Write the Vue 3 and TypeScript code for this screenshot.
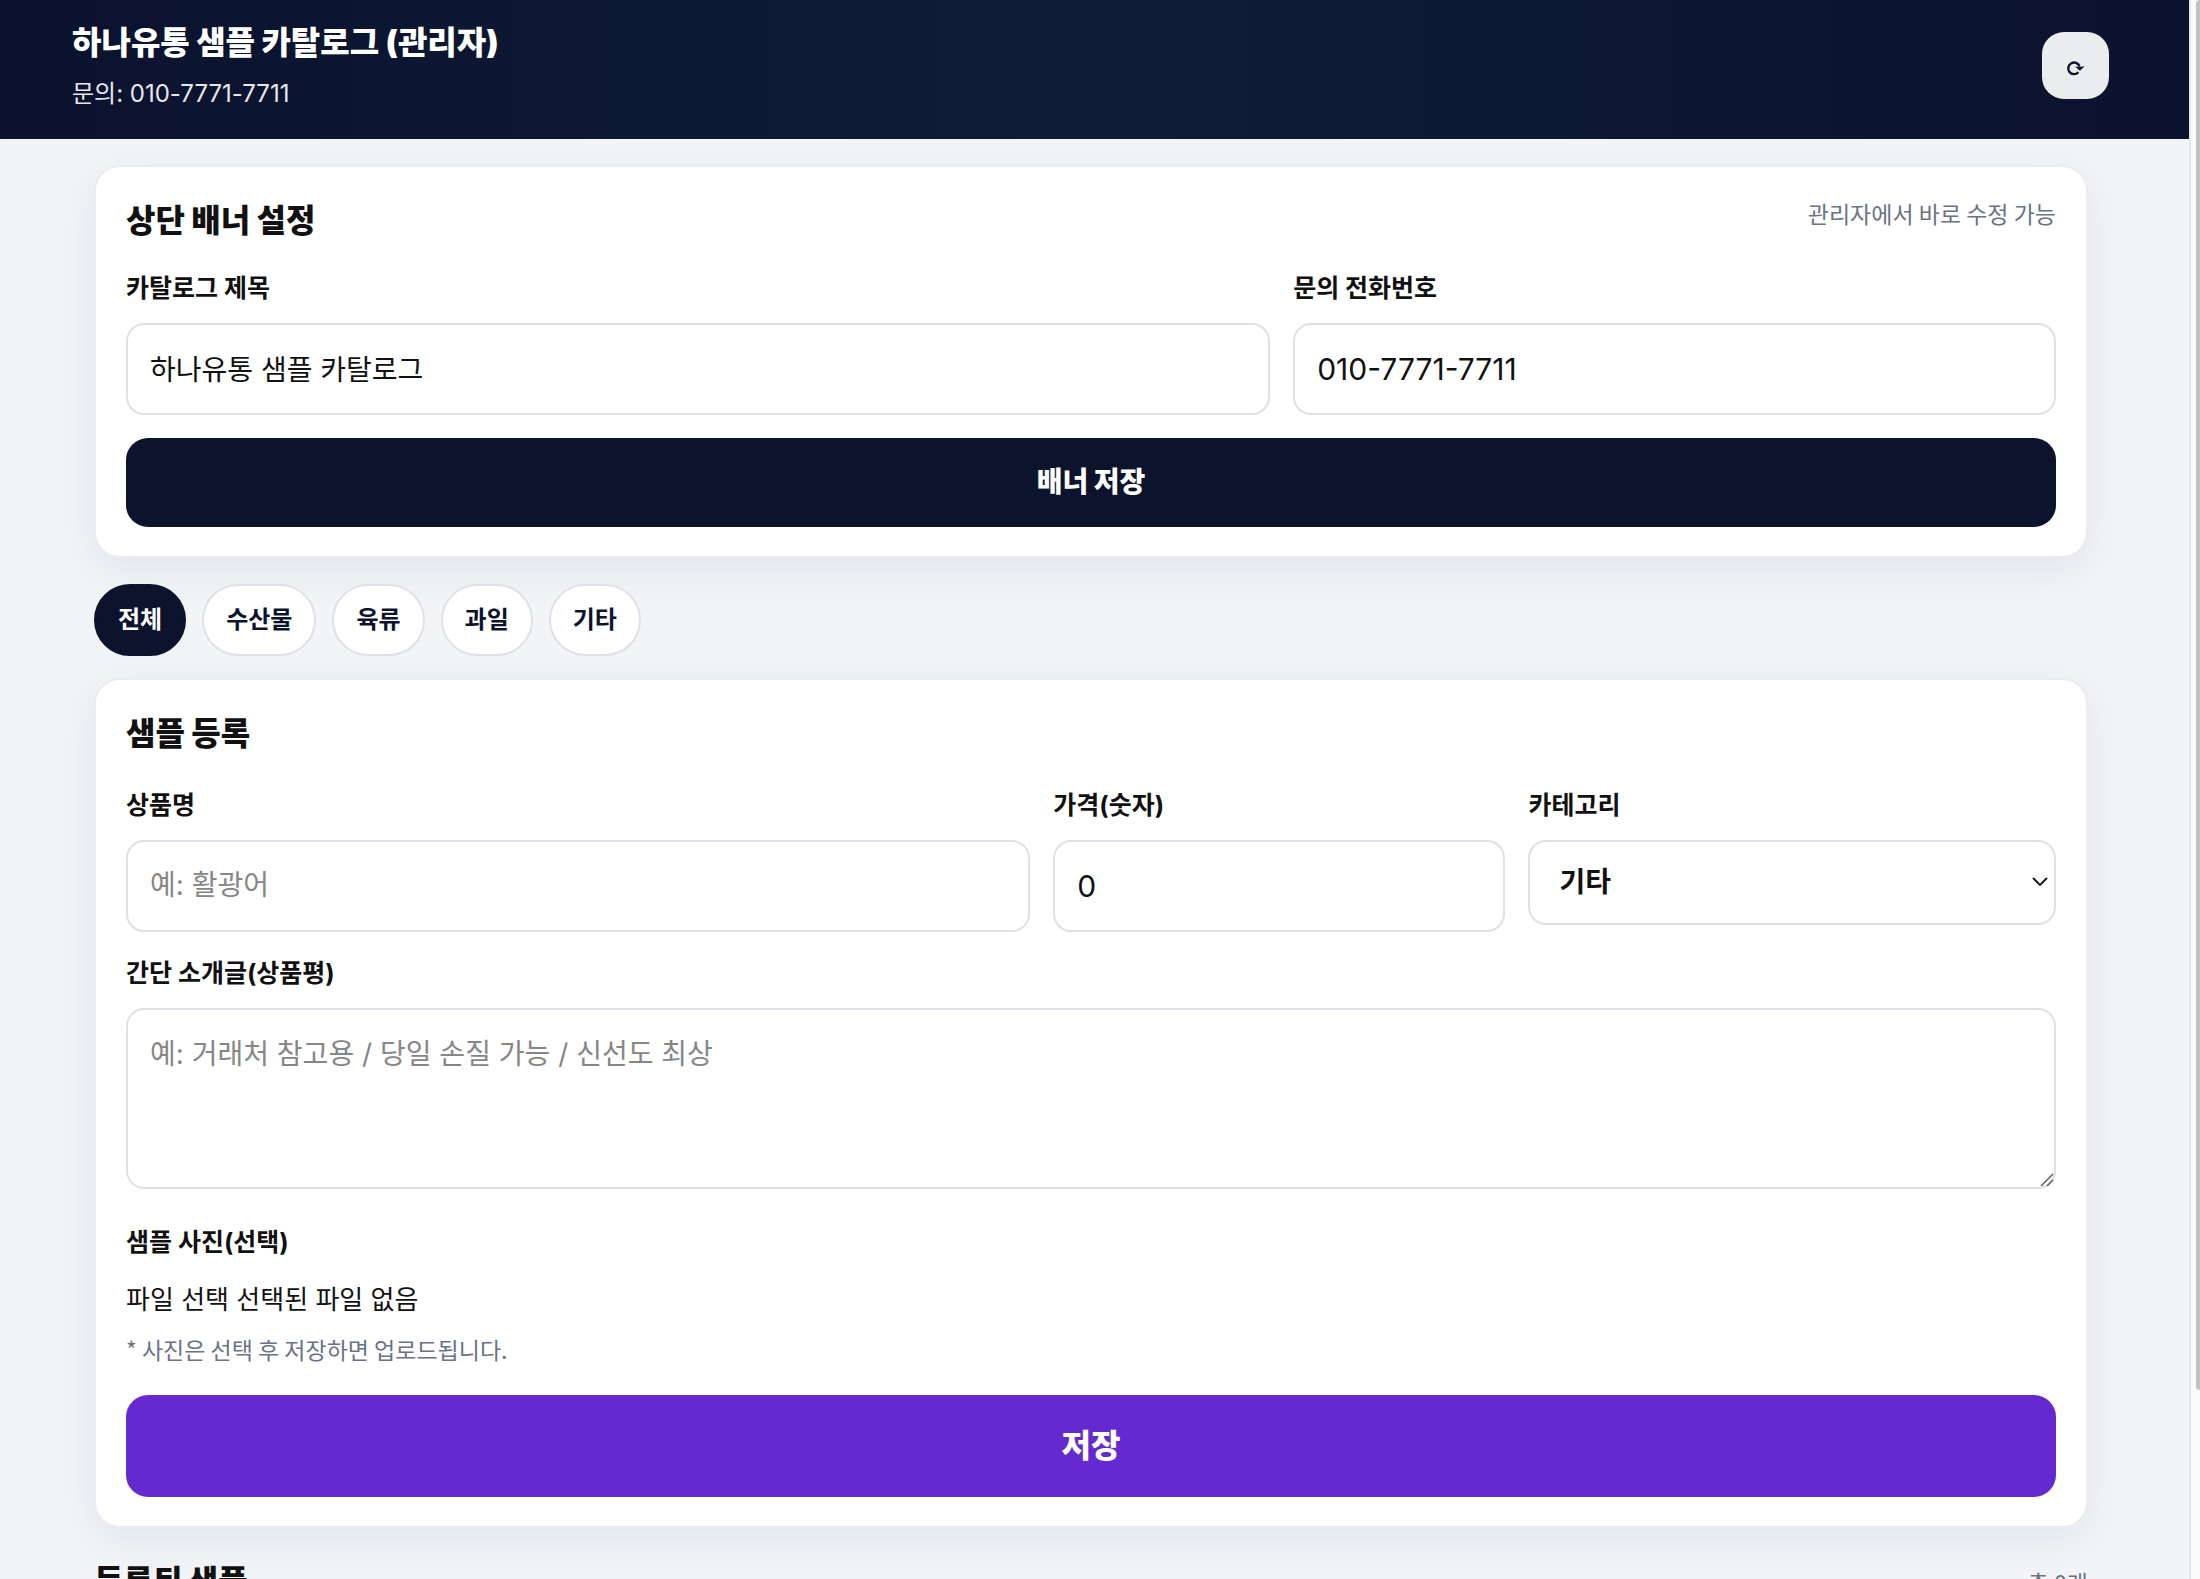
<script setup lang="ts">
import { computed, ref } from 'vue'

const title = ref('하나유통 샘플 카탈로그')
const phone = ref('010-7771-7711')
const categories = ['전체', '수산물', '육류', '과일', '기타']
const active = ref('전체')
const name = ref('')
const price = ref('0')
const category = ref('기타')
const intro = ref('')
const fileName = ref('')
const fileText = computed(() => fileName.value || '선택된 파일 없음')

function pickFile(event: Event) {
  const files = (event.target as HTMLInputElement).files
  fileName.value = files && files.length ? files[0].name : ''
}
</script>

<template>
  <div class="shell">
    <div class="page">
      <header class="top">
        <div>
          <h1>{{ title }} (관리자)</h1>
          <p>문의: {{ phone }}</p>
        </div>
        <button type="button" class="refresh" aria-label="새로고침">
          <svg viewBox="0 0 20 16" width="20" height="16" aria-hidden="true">
            <path d="M12.4 12.2A5.8 5.8 0 1 1 13.6 6.6" fill="none" stroke="#0b122d" stroke-width="2.4" />
            <path d="M9 6.4 13.5 7 18.6 6.2 14 10.8Z" fill="#0b122d" />
          </svg>
        </button>
      </header>

      <main>
        <section class="card">
          <div class="card-head">
            <h2>상단 배너 설정</h2>
            <span class="hint">관리자에서 바로 수정 가능</span>
          </div>
          <div class="row banner-row">
            <div class="field">
              <label for="title">카탈로그 제목</label>
              <input id="title" v-model="title" type="text" />
            </div>
            <div class="field">
              <label for="phone">문의 전화번호</label>
              <input id="phone" v-model="phone" class="digits" type="text" />
            </div>
          </div>
          <button type="button" class="primary">배너 저장</button>
        </section>

        <nav class="chips">
          <button
            v-for="item in categories"
            :key="item"
            type="button"
            :class="['chip', { on: item === active }]"
            @click="active = item"
          >{{ item }}</button>
        </nav>

        <section class="card">
          <div class="card-head form-head">
            <h2>샘플 등록</h2>
          </div>
          <div class="row item-row">
            <div class="field">
              <label for="name">상품명</label>
              <input id="name" v-model="name" type="text" placeholder="예: 활광어" />
            </div>
            <div class="field">
              <label for="price">가격(숫자)</label>
              <input id="price" v-model="price" class="digits" type="text" inputmode="numeric" />
            </div>
            <div class="field">
              <label for="category">카테고리</label>
              <div class="overlay-box">
                <select id="category" v-model="category">
                  <option v-for="item in categories.slice(1)" :key="item">{{ item }}</option>
                </select>
                <svg class="chevron" viewBox="0 0 16 10" width="16" height="10" aria-hidden="true">
                  <path d="M1 1 8 8 15 1" fill="none" stroke="#111" stroke-width="1.8" />
                </svg>
              </div>
            </div>
          </div>
          <div class="field intro">
            <label for="intro">간단 소개글(상품평)</label>
            <div class="overlay-box">
              <textarea id="intro" v-model="intro" placeholder="예: 거래처 참고용 / 당일 손질 가능 / 신선도 최상"></textarea>
              <svg class="grip" viewBox="0 0 14 14" width="14" height="14" aria-hidden="true">
                <path d="M1 13 13 1M7 13 13 7" fill="none" stroke="#666" stroke-width="1.6" />
              </svg>
            </div>
          </div>
          <div class="field photo">
            <label for="photo">샘플 사진(선택)</label>
            <input id="photo" class="file-input" type="file" accept="image/*" @change="pickFile" />
            <label for="photo" class="file">파일 선택 {{ fileText }}</label>
          </div>
          <p class="hint note">* 사진은 선택 후 저장하면 업로드됩니다.</p>
          <button type="button" class="primary save">저장</button>
        </section>

        <div class="list-head">
          <h2>등록된 샘플</h2>
          <span class="hint">총 0개</span>
        </div>
      </main>
    </div>
    <div class="track" aria-hidden="true"><div class="thumb"></div></div>
  </div>
</template>

<style>
body {
  margin: 0;
  overflow: hidden;
}
</style>

<style scoped>
* {
  box-sizing: border-box;
}
.shell {
  display: flex;
  height: 100vh;
  overflow: hidden;
  background: #f3f4f8;
  color: #111;
  font-family: Inter, "Noto Sans CJK KR", sans-serif;
}
.page {
  flex: 1;
  min-width: 0;
}
.track {
  display: flex;
  justify-content: flex-end;
  flex: none;
  width: 11px;
  border-left: 2px solid #e6e7ea;
  background: #fafafa;
}
.thumb {
  width: 4px;
  height: 88%;
  border-radius: 4px 0 0 4px;
  background: #c1c1c1;
}
h1,
h2,
p {
  margin: 0;
}
button,
input,
select,
textarea {
  margin: 0;
  font-family: inherit;
}
.top {
  display: flex;
  align-items: center;
  justify-content: space-between;
  padding: 20px 80px 28px 72px;
  background: linear-gradient(90deg, #0b122d, #0f1d38 50%, #0b122d);
  color: #fff;
}
h1 {
  font-size: 32px;
  line-height: 46px;
  font-weight: 900;
}
.top p {
  margin-top: 10px;
  font-size: 24px;
  line-height: 35px;
  color: #e7e8ee;
}
.refresh {
  display: flex;
  align-items: center;
  justify-content: center;
  width: 67px;
  height: 67px;
  padding: 4px 0 0;
  border: 0;
  border-radius: 22px;
  background: #ebecee;
}
main {
  padding: 26px 101px 0 94px;
}
.card {
  padding: 30px 30px 29px;
  border: 2px solid #ebecf1;
  border-radius: 26px;
  background: #fff;
  box-shadow: 0 12px 44px rgba(11, 18, 45, 0.07);
}
.card-head,
.list-head {
  display: flex;
  justify-content: space-between;
  align-items: flex-start;
}
h2 {
  font-size: 32px;
  line-height: 48px;
  font-weight: 900;
}
.hint {
  font-family: "Noto Sans CJK KR", sans-serif;
  font-size: 23px;
  line-height: 32px;
  color: #6b7285;
}
.row {
  display: grid;
  gap: 23px;
  align-items: start;
  margin-top: 25px;
}
.banner-row {
  grid-template-columns: 3fr 2fr;
}
.item-row {
  grid-template-columns: 12fr 6fr 7fr;
}
.field {
  display: flex;
  flex-direction: column;
}
.field label {
  font-size: 25px;
  line-height: 36px;
  font-weight: 700;
}
.field input,
select,
textarea {
  display: block;
  width: 100%;
  margin-top: 17px;
  border: 2px solid #dfe1e6;
  border-radius: 18px;
  background: #fff;
  color: #111;
  font-size: 28px;
}
.field input {
  height: 92px;
  padding: 0 22px 2px;
}
.field .digits {
  padding-bottom: 0;
  font-size: 30px;
}
::placeholder {
  color: #868686;
  opacity: 1;
}
.overlay-box {
  position: relative;
}
select {
  height: 85px;
  padding: 0 48px 2px 29px;
  appearance: none;
  font-weight: 700;
}
.chevron {
  position: absolute;
  right: 8px;
  bottom: 38px;
}
textarea {
  height: 181px;
  padding: 22px;
  line-height: 44px;
  resize: none;
}
.grip {
  position: absolute;
  right: 2px;
  bottom: 2px;
}
.primary {
  display: block;
  width: 100%;
  height: 89px;
  margin-top: 23px;
  padding: 0 0 6px;
  border: 0;
  border-radius: 22px;
  background: #0b132d;
  color: #fff;
  font-size: 28px;
  font-weight: 900;
}
.save {
  height: 102px;
  margin-top: 30px;
  background: #652acf;
  font-size: 32px;
}
.chips {
  display: flex;
  gap: 16px;
  margin: 26px 0 22px;
}
.chip {
  height: 72px;
  padding: 0 22px 5px;
  border: 2px solid #dfe1e6;
  border-radius: 36px;
  background: #fff;
  color: #0b132d;
  font-size: 24px;
  font-weight: 700;
}
.chip.on {
  border-color: #0b132d;
  background: #0b132d;
  color: #fff;
}
.form-head {
  padding-bottom: 4px;
}
.intro {
  margin-top: 23px;
}
.photo {
  position: relative;
  margin-top: 35px;
}
.field .file {
  margin-top: 21px;
  font-size: 26px;
  line-height: 38px;
  font-weight: 400;
}
.field .file-input {
  position: absolute;
  width: 1px;
  height: 1px;
  margin: 0;
  padding: 0;
  opacity: 0;
}
.note {
  margin-top: 14px;
}
.list-head {
  align-items: center;
  margin-top: 30px;
}
</style>
